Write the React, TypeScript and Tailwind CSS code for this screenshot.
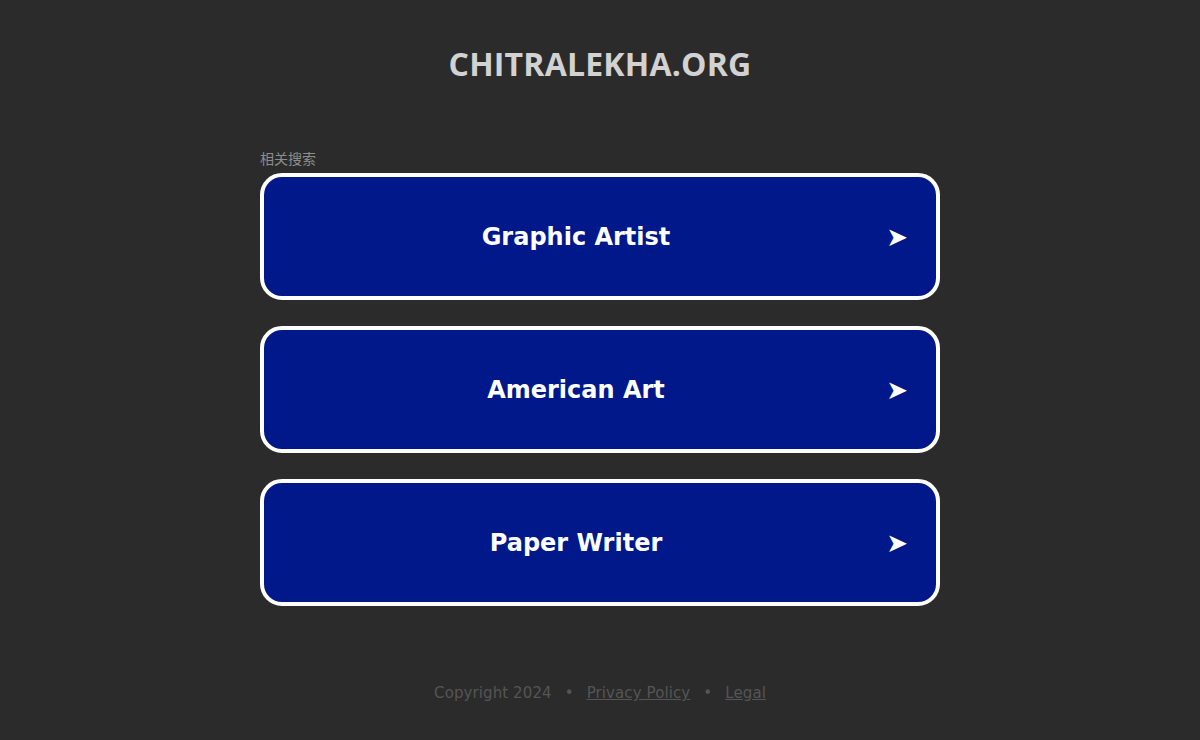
import React from 'react';

const links = ['Graphic Artist', 'American Art', 'Paper Writer'];

export default function App() {
  return (
    <div className="min-h-screen bg-[#2b2b2b] flex flex-col items-center font-['DejaVu_Sans',sans-serif]">
      <h1 className="mt-[44px] h-[40px] text-[32px] leading-[40px] font-bold tracking-[0.2px] text-[#d2d2d2] font-['Open_Sans',sans-serif]">
        CHITRALEKHA.ORG
      </h1>

      <div className="mt-[65px] w-[680px]">
        <div className="text-[14px] leading-[18px] text-[#8d8d8d] font-['Noto_Sans_CJK_SC',sans-serif]">相关搜索</div>
        <div className="mt-[6px] flex flex-col gap-[26px]">
          {links.map((label) => (
            <a
              key={label}
              href="#"
              className="relative flex h-[127px] items-center justify-center rounded-[22px] border-4 border-white bg-[#00188a] text-white"
            >
              <span className="mr-[48px] text-[24px] font-bold leading-none">{label}</span>
              <span className="absolute right-[28px] top-1/2 -translate-y-1/2 text-[26px] leading-none">➤</span>
            </a>
          ))}
        </div>
      </div>

      <div className="mt-[76px] flex items-center gap-[13px] text-[15px] tracking-[0.1px] text-[#555555]">
        <span>Copyright 2024</span>
        <span>•</span>
        <a href="#" className="underline">Privacy Policy</a>
        <span>•</span>
        <a href="#" className="underline">Legal</a>
      </div>
    </div>
  );
}
